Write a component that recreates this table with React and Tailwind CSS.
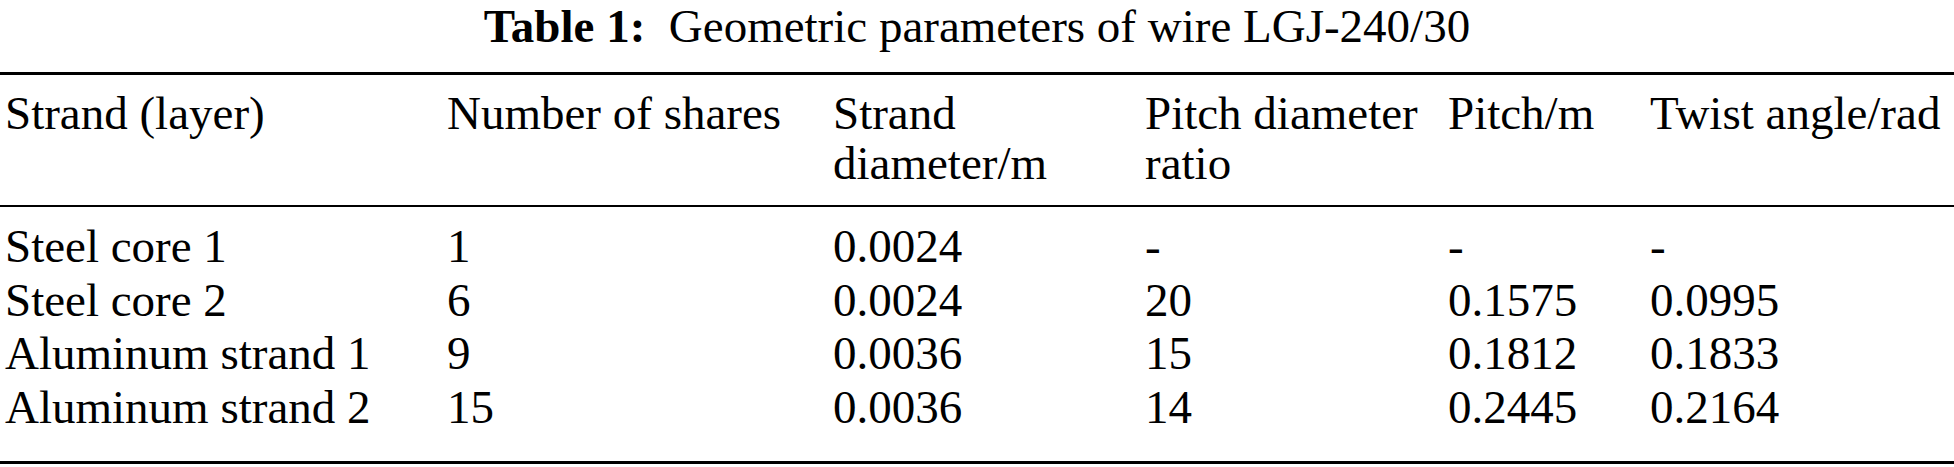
export default function App() {
  const rows = [
    ["Steel core 1", "1", "0.0024", "-", "-", "-"],
    ["Steel core 2", "6", "0.0024", "20", "0.1575", "0.0995"],
    ["Aluminum strand 1", "9", "0.0036", "15", "0.1812", "0.1833"],
    ["Aluminum strand 2", "15", "0.0036", "14", "0.2445", "0.2164"],
  ];
  const head = [
    ["Strand (layer)"],
    ["Number of shares"],
    ["Strand", "diameter/m"],
    ["Pitch diameter", "ratio"],
    ["Pitch/m"],
    ["Twist angle/rad"],
  ];
  return (
    <div className="w-[1954px] h-[467px] bg-white text-black font-['Liberation_Serif',serif] text-[47px] overflow-hidden">
      <div className="h-[72px] leading-[53px] text-center whitespace-pre">
        <span className="font-bold">Table 1:</span>
        <span>{"  Geometric parameters of wire LGJ-240/30"}</span>
      </div>
      <table className="w-full border-collapse table-fixed">
        <colgroup>
          <col className="w-[447px]" />
          <col className="w-[386px]" />
          <col className="w-[312px]" />
          <col className="w-[303px]" />
          <col className="w-[202px]" />
          <col />
        </colgroup>
        <thead>
          <tr className="border-t-[3px] border-b-[2px] border-black align-top">
            {head.map((h, j) => (
              <th
                key={j}
                className={
                  j === 0
                    ? "font-normal text-left whitespace-nowrap leading-[50px] pl-[5px] pt-[13px] pb-[17px]"
                    : "font-normal text-left whitespace-nowrap leading-[50px] p-0 pt-[13px] pb-[17px]"
                }
              >
                {h.map((line, k) => (
                  <div key={k}>{line}</div>
                ))}
              </th>
            ))}
          </tr>
        </thead>
        <tbody className="border-b-[3px] border-black">
          {rows.map((r, i) => (
            <tr
              key={i}
              className={
                i === 0
                  ? "align-top [&>td]:pt-[13px]"
                  : i === rows.length - 1
                  ? "align-top [&>td]:pb-[27px]"
                  : "align-top"
              }
            >
              {r.map((c, j) => (
                <td
                  key={j}
                  className={
                    j === 0
                      ? "whitespace-nowrap leading-[53.5px] pl-[5px]"
                      : "whitespace-nowrap leading-[53.5px]"
                  }
                >
                  {c}
                </td>
              ))}
            </tr>
          ))}
        </tbody>
      </table>
    </div>
  );
}
